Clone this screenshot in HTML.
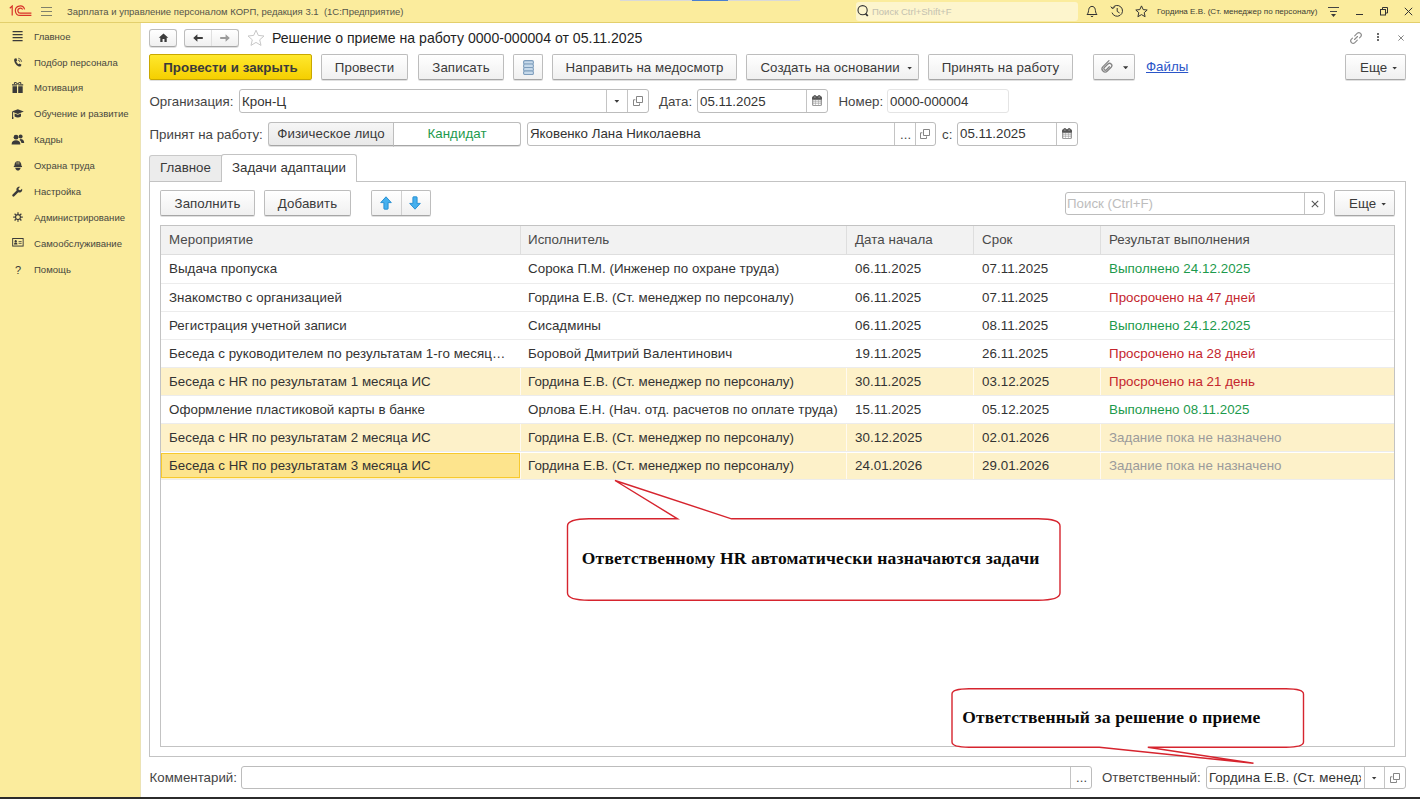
<!DOCTYPE html>
<html lang="ru">
<head>
<meta charset="utf-8">
<title>Решение о приеме на работу</title>
<style>
*{box-sizing:border-box;margin:0;padding:0}
html,body{width:1420px;height:799px;overflow:hidden;background:#fff}
body{position:relative;font-family:"Liberation Sans",Arial,sans-serif;font-size:13px;color:#333;}
.abs{position:absolute}
#titlebar{position:absolute;left:0;top:0;width:1420px;height:23px;background:#fbec9d;border-bottom:1px solid #e3cf6c}
#sidebar{position:absolute;left:0;top:23px;width:140px;height:774px;background:#fbec9d}
#sideedge{position:absolute;left:140px;top:23px;width:1px;height:774px;background:#ece3b5}
#bottombar{position:absolute;left:0;top:797px;width:1420px;height:2px;background:#2b2b2b}
.tb-text{position:absolute;font-size:9.5px;color:#55554a;white-space:nowrap}
.menu-item{position:absolute;left:34px;font-size:9.55px;color:#47473d;white-space:nowrap;line-height:13px}
.micon{position:absolute;left:11px;width:14px;height:14px}
.btn{position:absolute;height:26px;border:1px solid #bdbdbd;border-bottom-color:#a6a6a6;border-radius:2px;background:linear-gradient(#ffffff,#f0f0f0);box-shadow:0 1px 0 rgba(0,0,0,.12);font-size:13.3px;color:#3a3a3a;text-align:center;line-height:25px;white-space:nowrap;letter-spacing:0.07px}
.btn.primary{background:linear-gradient(#ffe82e,#f5cf00);border-color:#c9a800;font-weight:bold;color:#3a3a3a}
.lbl{position:absolute;font-size:13.3px;color:#444;white-space:nowrap;line-height:16px}
.inp{position:absolute;height:23px;border:1px solid #bcbcbc;border-radius:3px;background:#fff;font-size:13.3px;color:#333;line-height:21px;padding-left:2px;white-space:nowrap;overflow:hidden}
.inp .sep{position:absolute;top:0;bottom:0;width:1px;background:#c4c4c4}
.caret{position:absolute;width:5.3px;height:3px;background:#3a3a3a;clip-path:polygon(0 0,100% 0,50% 100%)}
.cell{position:absolute;font-size:13.33px;letter-spacing:0.05px;line-height:16px;white-space:nowrap}
</style>
</head>
<body>
<!-- SECTION:titlebar -->
<div id="titlebar">
<div class="abs" style="left:620px;top:0;width:180px;height:1px;background:#d9d9d9"></div>
<div class="abs" style="left:692px;top:0;width:36px;height:1px;background:#4a7fd0"></div>
<svg class="abs" style="left:9px;top:5px" width="23" height="12" viewBox="0 0 23 12" fill="none" stroke="#d8322a" stroke-width="1.2">
<path d="M0.8 3.2 L3.2 1 V10.6" />
<path d="M22.4 10.4 H11.2 A4.7 4.7 0 1 1 15.6 4.4" />
<path d="M22.4 8.2 H11.4 A2.5 2.5 0 1 1 13.6 4.6" />
</svg>
<div class="abs" style="left:41px;top:7px;width:11px;height:1px;background:#80806a"></div>
<div class="abs" style="left:41px;top:11px;width:11px;height:1px;background:#80806a"></div>
<div class="abs" style="left:41px;top:15px;width:11px;height:1px;background:#80806a"></div>
<div class="tb-text" id="apptitle" style="left:67px;top:5px;line-height:13px">Зарплата и управление персоналом КОРП, редакция 3.1&nbsp; (1С:Предприятие)</div>
<div class="abs" style="left:856px;top:2px;width:222px;height:19px;background:#fdf5cd;border-radius:3px"></div>
<svg class="abs" style="left:857px;top:4px" width="13" height="14" viewBox="0 0 13 14" fill="none" stroke="#333" stroke-width="1.1"><circle cx="5.6" cy="6.2" r="4.6"/><path d="M8.6 9.6 L10.8 12" stroke-width="1.8"/></svg>
<div class="tb-text" style="left:872px;top:5px;line-height:13px;color:#c4c1b0">Поиск Ctrl+Shift+F</div>
<svg class="abs" style="left:1086px;top:5px" width="12" height="13" viewBox="0 0 12 13" fill="none" stroke="#333" stroke-width="1"><path d="M1 9.5 C2.6 8 2.4 6 2.8 4.2 C3.2 2.4 4.4 1.4 6 1.4 C7.6 1.4 8.8 2.4 9.2 4.2 C9.6 6 9.4 8 11 9.5 Z"/><path d="M4.8 11 Q6 12.4 7.2 11"/></svg>
<svg class="abs" style="left:1110px;top:4px" width="14" height="14" viewBox="0 0 14 14" fill="none" stroke="#333" stroke-width="1"><path d="M2.4 4.2 A5.4 5.4 0 1 1 2 8.6"/><path d="M0.8 2.6 L2.4 4.6 L4.6 3.4" /><path d="M7.2 4 V7.4 L9.6 9"/></svg>
<svg class="abs" style="left:1135px;top:5px" width="13" height="13" viewBox="0 0 13 13" fill="none" stroke="#333" stroke-width="1"><path d="M6.5 0.9 L8.2 4.6 L12.2 5 L9.2 7.7 L10.1 11.7 L6.5 9.6 L2.9 11.7 L3.8 7.7 L0.8 5 L4.8 4.6 Z"/></svg>
<div class="tb-text" id="usertxt" style="left:1157px;top:6px;font-size:8.1px;line-height:11px;color:#3d3d33">Гордина Е.В. (Ст. менеджер по персоналу)</div>
<div class="abs" style="left:1328px;top:7px;width:11px;height:1px;background:#444"></div>
<div class="abs" style="left:1330px;top:11px;width:7px;height:1px;background:#444"></div>
<div class="caret" style="left:1331px;top:14px;width:5px;height:3px"></div>
<div class="abs" style="left:1356px;top:14px;width:7px;height:1px;background:#333"></div>
<svg class="abs" style="left:1380px;top:7px" width="8" height="9" viewBox="0 0 8 9" fill="none" stroke="#333" stroke-width="1"><rect x="0.5" y="2.5" width="5" height="5.5"/><path d="M2.5 2.5 V0.5 H7.5 V6 H5.5"/></svg>
<svg class="abs" style="left:1404px;top:7px" width="9" height="9" viewBox="0 0 9 9" fill="none" stroke="#333" stroke-width="1"><path d="M0.8 0.8 L8.2 8.2 M8.2 0.8 L0.8 8.2"/></svg>
</div>
<!-- SECTION:sidebar -->
<div id="sidebar"></div>
<svg class="micon" style="top:29.2px" viewBox="0 0 14 14"><path d="M1.6 2.6H11.6M1.6 5.6H11.6M1.6 8.6H11.6M1.6 11.6H11.6" stroke="#3a3a3a" stroke-width="1.1" fill="none"/></svg>
<div class="menu-item" style="top:30px">Главное</div>
<svg class="micon" style="top:55.2px" viewBox="0 0 14 14"><g transform="translate(1.4,2.3) scale(0.8)"><path d="M3.2 1.6 L5 1.2 L6 4 L4.8 5 C5.2 6.6 6.4 8 7.8 8.8 L9 7.8 L11.4 9.4 L10.6 11 C10 11.8 8.6 11.8 7.4 11.2 C4.6 9.8 2.6 7 2.2 4 C2.1 3 2.4 2 3.2 1.6 Z" fill="#3a3a3a"/><path d="M7 3.4 A2.8 2.8 0 0 1 9.4 6" stroke="#3a3a3a" fill="none" stroke-width="1"/><path d="M7.4 1.2 A5 5 0 0 1 11.6 5.6" stroke="#3a3a3a" fill="none" stroke-width="1"/></g></svg>
<div class="menu-item" style="top:56px">Подбор персонала</div>
<svg class="micon" style="top:81.0px" viewBox="0 0 14 14"><path d="M1.5 5.2H6V12H1.5ZM7.2 5.2H11.7V12H7.2ZM1 3.2H6V4.6H1ZM7.2 3.2H12.2V4.6H7.2Z" fill="#3a3a3a"/><path d="M6.6 3.2 C5 0.6 2.6 1.2 3.6 3 M6.6 3.2 C8.2 0.6 10.6 1.2 9.6 3" stroke="#3a3a3a" fill="none" stroke-width="1.1"/></svg>
<div class="menu-item" style="top:81px">Мотивация</div>
<svg class="micon" style="top:107.0px" viewBox="0 0 14 14"><path d="M0.8 4.6 L6.8 2.2 L12.8 4.6 L6.8 7 Z" fill="#3a3a3a"/><path d="M3.6 6.4 V9.4 C5.4 10.8 8.2 10.8 10 9.4 V6.4 L6.8 7.8 Z" fill="#3a3a3a"/><path d="M1.6 5 V10.4" stroke="#3a3a3a" stroke-width="1"/><rect x="1" y="10" width="1.4" height="2" fill="#3a3a3a"/></svg>
<div class="menu-item" style="top:107px">Обучение и развитие</div>
<svg class="micon" style="top:132.7px" viewBox="0 0 14 14"><circle cx="5" cy="4.2" r="2.4" fill="#3a3a3a"/><path d="M0.6 11.6 C0.6 8.4 2.4 7.2 5 7.2 C7.6 7.2 9.4 8.4 9.4 11.6 Z" fill="#3a3a3a"/><circle cx="9.6" cy="3.4" r="2" fill="#3a3a3a"/><path d="M9.4 6 C11.8 6 13.2 7.2 13.2 10 H10.4 C10.2 8.6 9.6 7.6 8.4 7 Z" fill="#3a3a3a"/></svg>
<div class="menu-item" style="top:133px">Кадры</div>
<svg class="micon" style="top:158.7px" viewBox="0 0 14 14"><g transform="translate(1.9,0.6) scale(0.76,0.9)"><path d="M2 7 C2 3.6 4 1.6 6.6 1.6 C9.2 1.6 11.2 3.6 11.2 7 Z" fill="#3a3a3a"/><rect x="1.2" y="7" width="10.8" height="1.3" fill="#3a3a3a"/><path d="M3 9 C3.4 11 5 12.2 6.6 12.2 C8.2 12.2 9.8 11 10.2 9 Z" fill="#3a3a3a"/><path d="M5.4 1.8 V5.4 M7.8 1.8 V5.4" stroke="#fbec9d" stroke-width="0.7"/></g></svg>
<div class="menu-item" style="top:159px">Охрана труда</div>
<svg class="micon" style="top:184.4px" viewBox="0 0 14 14"><g transform="translate(0.6,2) scale(0.84)"><path d="M12.4 3.2 L10.4 5.2 L8.6 4.8 L8.2 3 L10.2 1 C8.6 0.4 6.8 1 6 2.6 C5.6 3.6 5.6 4.6 6 5.4 L1.2 10.2 C0.6 10.8 0.6 11.6 1.2 12.2 C1.8 12.8 2.6 12.8 3.2 12.2 L8 7.4 C9.4 8 11.2 7.6 12.2 6.2 C12.8 5.2 12.9 4.2 12.4 3.2 Z" fill="#3a3a3a"/></g></svg>
<div class="menu-item" style="top:185px">Настройка</div>
<svg class="micon" style="top:210.4px" viewBox="0 0 14 14"><g transform="translate(1.75,1.85) scale(0.77)"><circle cx="6.8" cy="6.8" r="3.2" fill="none" stroke="#3a3a3a" stroke-width="1.5"/><path d="M6.8 0.6V2.8M6.8 10.8V13M0.6 6.8H2.8M10.8 6.8H13M2.4 2.4L4 4M9.6 9.6L11.2 11.2M11.2 2.4L9.6 4M4 9.6L2.4 11.2" stroke="#3a3a3a" stroke-width="1.6"/></g></svg>
<div class="menu-item" style="top:211px">Администрирование</div>
<svg class="micon" style="top:236.4px" viewBox="0 0 14 14"><g transform="translate(1.16,0.16) scale(0.845,0.9)"><rect x="0.6" y="2.6" width="12.4" height="8.4" fill="none" stroke="#3a3a3a" stroke-width="1.1"/><circle cx="4.2" cy="5.6" r="1.3" fill="#3a3a3a"/><path d="M2.2 9.2 C2.2 7.6 3 7 4.2 7 C5.4 7 6.2 7.6 6.2 9.2 Z" fill="#3a3a3a"/><path d="M7.6 6H11.2M7.6 8H11.2" stroke="#3a3a3a" stroke-width="0.9"/></g></svg>
<div class="menu-item" style="top:237px">Самообслуживание</div>
<div class="abs" style="left:14px;top:262px;font-size:11px;line-height:14px;color:#3a3a3a;margin-left:1px;margin-top:1px">?</div>
<div class="menu-item" style="top:263px">Помощь</div>
<div id="sideedge"></div>
<!-- SECTION:header -->
<div class="btn" style="left:149px;top:29px;width:28px;height:18px;border-radius:3px"></div>
<svg class="abs" style="left:157.5px;top:33.3px" width="11" height="9.4" viewBox="0 0 13 12"><path d="M6.5 0.6 L12.6 6.2 H10.6 V11.6 H7.7 V7.8 H5.3 V11.6 H2.4 V6.2 H0.4 Z" fill="#3c3c3c"/></svg>
<div class="btn" style="left:184px;top:29px;width:55px;height:18px;border-radius:3px"></div>
<div class="abs" style="left:211px;top:30px;width:1px;height:16px;background:#e0e0e0"></div>
<svg class="abs" style="left:193.3px;top:34.3px" width="10" height="8" viewBox="0 0 10 8"><path d="M0.2 4 L4.4 0.3 V3 H9.8 V5 H4.4 V7.7 Z" fill="#3c3c3c"/></svg>
<svg class="abs" style="left:219.8px;top:34.3px" width="10" height="8" viewBox="0 0 10 8"><path d="M9.8 4 L5.6 0.3 V3 H0.2 V5 H5.6 V7.7 Z" fill="#9a9a9a"/></svg>
<svg class="abs" style="left:247px;top:29px" width="18" height="18" viewBox="0 0 18 18" fill="none" stroke="#c8c8c8" stroke-width="1"><path d="M9 1.2 L11.3 6.4 L17 7 L12.7 10.8 L14 16.4 L9 13.4 L4 16.4 L5.3 10.8 L1 7 L6.7 6.4 Z"/></svg>
<div class="abs" id="doctitle" style="left:272px;top:29px;font-size:14.1px;line-height:18px;color:#1f1f1f;white-space:nowrap">Решение о приеме на работу 0000-000004 от 05.11.2025</div>
<svg class="abs" style="left:1348px;top:29.9px" width="16" height="16" viewBox="-8.2 -8.2 16.4 16.4" fill="none" stroke="#8c8c8c" stroke-width="1.15" stroke-linecap="round"><g transform="rotate(-45)"><path d="M0.6 -2.5H4.1A2.5 2.5 0 0 1 4.1 2.5H2.6"/><path d="M-0.6 2.5H-4.1A2.5 2.5 0 0 1 -4.1 -2.5H-2.6"/><path d="M-2.2 0H2.2"/></g></svg>
<div class="abs" style="left:1377px;top:33.3px;width:2.2px;height:1.8px;background:#6a6a6a"></div>
<div class="abs" style="left:1377px;top:36.3px;width:2.2px;height:1.8px;background:#6a6a6a"></div>
<div class="abs" style="left:1377px;top:39.2px;width:2.2px;height:1.8px;background:#6a6a6a"></div>
<svg class="abs" style="left:1397.5px;top:34.6px" width="6" height="6" viewBox="0 0 6 6" fill="none" stroke="#787878" stroke-width="0.9"><path d="M0.4 0.4L5.6 5.6M5.6 0.4L0.4 5.6"/></svg>
<!-- toolbar -->
<div class="btn primary" style="left:149px;top:54px;width:163px">Провести и закрыть</div>
<div class="btn" style="left:321px;top:54px;width:87px">Провести</div>
<div class="btn" style="left:418px;top:54px;width:86px">Записать</div>
<div class="btn" style="left:513px;top:54px;width:30px"></div>
<svg class="abs" style="left:522.9px;top:59.9px" width="11" height="15" viewBox="0 0 11 15"><rect x="0.6" y="0.60" width="9.8" height="3.6" rx="1.4" fill="#c6d9ea" stroke="#7d9dbc" stroke-width="1.1"/><rect x="0.6" y="4.05" width="9.8" height="3.6" rx="1.4" fill="#c6d9ea" stroke="#7d9dbc" stroke-width="1.1"/><rect x="0.6" y="7.50" width="9.8" height="3.6" rx="1.4" fill="#c6d9ea" stroke="#7d9dbc" stroke-width="1.1"/><rect x="0.6" y="10.95" width="9.8" height="3.6" rx="1.4" fill="#c6d9ea" stroke="#7d9dbc" stroke-width="1.1"/></svg>
<div class="btn" style="left:552px;top:54px;width:185px">Направить на медосмотр</div>
<div class="btn" style="left:746px;top:54px;width:173px;text-align:left;padding-left:13.4px">Создать на основании</div>
<div class="caret" style="left:907px;top:66.5px"></div>
<div class="btn" style="left:928px;top:54px;width:145px">Принять на работу</div>
<div class="btn" style="left:1093px;top:54px;width:42px"></div>
<svg class="abs" style="left:1098.4px;top:57.5px" width="18" height="18" viewBox="-9 -9 18 18" fill="none" stroke="#828282" stroke-width="1.25" stroke-linecap="round"><g transform="rotate(45)"><path d="M-3.1 -5.9V2.6A3.1 3.1 0 0 0 3.1 2.6V-2.8A2.3 2.3 0 0 0 -1.5 -2.8V2.3A1.5 1.5 0 0 0 1.5 2.3V-1.8"/></g></svg>
<div class="caret" style="left:1123px;top:66.3px"></div>
<div class="abs" style="left:1146px;top:59px;font-size:13.3px;line-height:16px;color:#2a55c8;text-decoration:underline;white-space:nowrap">Файлы</div>
<div class="btn" style="left:1345px;top:54px;width:61px;text-align:left;padding-left:14px">Еще</div>
<div class="caret" style="left:1392px;top:66.5px"></div>
<!-- SECTION:form -->
<div class="lbl" style="left:149.5px;top:94px">Организация:</div>
<div class="inp" style="left:239px;top:89px;width:410px;height:24px;line-height:24px">Крон-Ц<div class="sep" style="left:366px"></div><div class="sep" style="left:387px"></div></div>
<div class="caret" style="left:614.2px;top:99.7px"></div>
<svg class="abs" style="left:632.5px;top:96.3px" width="10" height="10" viewBox="0 0 10 10" fill="none" stroke="#858585" stroke-width="1"><path d="M3.5 0.5H9.5V6.5H3.5Z"/><path d="M2.4 3.8H0.5V9.5H6.5V7.4"/></svg>
<div class="lbl" style="left:659px;top:94px">Дата:</div>
<div class="inp" style="left:697px;top:89px;width:131px;height:24px;line-height:24px">05.11.2025<div class="sep" style="left:108px"></div></div>
<svg class="abs" style="left:811.5px;top:95.4px" width="10" height="11" viewBox="0 0 10 11"><rect x="0" y="1.2" width="10" height="9.8" rx="1.6" fill="#9b9b9b"/><path d="M0 4.6 V2.8 Q0 1.2 1.6 1.2 H8.4 Q10 1.2 10 2.8 V4.6 Z" fill="#555"/><circle cx="2.9" cy="1.6" r="1.5" fill="#555"/><circle cx="7.1" cy="1.6" r="1.5" fill="#555"/><circle cx="2.9" cy="2" r="0.6" fill="#ddd"/><circle cx="7.1" cy="2" r="0.6" fill="#ddd"/><path d="M1.3 5.3H3.5V6.6H1.3ZM4 5.3H6V6.6H4ZM6.5 5.3H8.7V6.6H6.5ZM1.3 7.2H3.5V8.5H1.3ZM4 7.2H6V8.5H4ZM6.5 7.2H8.7V8.5H6.5ZM1.3 9.1H3.5V10.1H1.3ZM4 9.1H6V10.1H4ZM6.5 9.1H8.7V10.1H6.5Z" fill="#fff"/></svg>
<div class="lbl" style="left:838.5px;top:94px">Номер:</div>
<div class="inp" style="left:887px;top:89px;width:122px;height:24px;line-height:24px;border-color:#e4e4e4">0000-000004</div>
<div class="lbl" style="left:149.5px;top:126.5px">Принят на работу:</div>
<div class="btn" style="left:268px;top:122px;width:126px;height:24px;line-height:22px;border-radius:3px 0 0 3px;background:linear-gradient(#f6f6f6,#e9e9e9);font-size:13.3px">Физическое лицо</div>
<div class="btn" style="left:393px;top:122px;width:128px;height:24px;line-height:22px;border-radius:0 3px 3px 0;background:#fff;color:#1c9a4c;font-size:13.3px">Кандидат</div>
<div class="inp" style="left:527px;top:122px;width:409px;height:24px;line-height:22px">Яковенко Лана Николаевна<div class="sep" style="left:366px"></div><div class="sep" style="left:387px"></div></div>
<div class="abs" style="left:900px;top:126.5px;font-size:13px;letter-spacing:0.2px;line-height:16px;color:#444">...</div>
<svg class="abs" style="left:920.2px;top:129px" width="10" height="10" viewBox="0 0 10 10" fill="none" stroke="#858585" stroke-width="1"><path d="M3.5 0.5H9.5V6.5H3.5Z"/><path d="M2.4 3.8H0.5V9.5H6.5V7.4"/></svg>
<div class="lbl" style="left:942px;top:126.5px">с:</div>
<div class="inp" style="left:957px;top:122px;width:121px;height:24px;line-height:22px">05.11.2025<div class="sep" style="left:98px"></div></div>
<svg class="abs" style="left:1061.5px;top:128.4px" width="10" height="11" viewBox="0 0 10 11"><rect x="0" y="1.2" width="10" height="9.8" rx="1.6" fill="#9b9b9b"/><path d="M0 4.6 V2.8 Q0 1.2 1.6 1.2 H8.4 Q10 1.2 10 2.8 V4.6 Z" fill="#555"/><circle cx="2.9" cy="1.6" r="1.5" fill="#555"/><circle cx="7.1" cy="1.6" r="1.5" fill="#555"/><circle cx="2.9" cy="2" r="0.6" fill="#ddd"/><circle cx="7.1" cy="2" r="0.6" fill="#ddd"/><path d="M1.3 5.3H3.5V6.6H1.3ZM4 5.3H6V6.6H4ZM6.5 5.3H8.7V6.6H6.5ZM1.3 7.2H3.5V8.5H1.3ZM4 7.2H6V8.5H4ZM6.5 7.2H8.7V8.5H6.5ZM1.3 9.1H3.5V10.1H1.3ZM4 9.1H6V10.1H4ZM6.5 9.1H8.7V10.1H6.5Z" fill="#fff"/></svg>
<!-- SECTION:tabs -->
<div class="abs" style="left:149px;top:181px;width:1257px;height:576px;border:1px solid #c3c3c3;background:#fff"></div>
<div class="abs" style="left:149px;top:155px;width:73px;height:27px;border:1px solid #c9c9c9;border-bottom:1px solid #c3c3c3;border-radius:3px 0 0 0;background:#ececec;font-size:13.3px;line-height:23.6px;text-align:center;color:#3a3a3a">Главное</div>
<div class="abs" style="left:221px;top:154px;width:136px;height:28px;border:1px solid #c3c3c3;border-bottom:none;border-radius:3px 3px 0 0;background:#fff;font-size:13.3px;line-height:25.6px;text-align:center;color:#333">Задачи адаптации</div>
<div class="btn" style="left:160px;top:190px;width:95px">Заполнить</div>
<div class="btn" style="left:264px;top:190px;width:87px">Добавить</div>
<div class="btn" style="left:371px;top:190px;width:60px"></div>
<div class="abs" style="left:401px;top:191px;width:1px;height:24px;background:#d0d0d0"></div>
<svg class="abs" style="left:380.1px;top:196.3px" width="12" height="14" viewBox="0 0 12 14"><path d="M6 0.8 L11.3 6.6 H8.1 V12.6 Q8.1 13.2 7.5 13.2 H4.5 Q3.9 13.2 3.9 12.6 V6.6 H0.7 Z" fill="#45b0ee" stroke="#1f8ad0" stroke-width="0.9" stroke-linejoin="round"/></svg>
<svg class="abs" style="left:408.9px;top:196.3px" width="12" height="14" viewBox="0 0 12 14"><path d="M6 13.2 L11.3 7.4 H8.1 V1.4 Q8.1 0.8 7.5 0.8 H4.5 Q3.9 0.8 3.9 1.4 V7.4 H0.7 Z" fill="#45b0ee" stroke="#1f8ad0" stroke-width="0.9" stroke-linejoin="round"/></svg>
<div class="inp" style="left:1065px;top:192px;width:260px;color:#bdbdbd;padding-left:1px">Поиск (Ctrl+F)<div class="sep" style="left:238px"></div></div>
<svg class="abs" style="left:1311px;top:200px" width="8" height="8" viewBox="0 0 8 8" fill="none" stroke="#555" stroke-width="1.1"><path d="M0.8 0.8 L7.2 7.2 M7.2 0.8 L0.8 7.2"/></svg>
<div class="btn" style="left:1334px;top:190px;width:61px;text-align:left;padding-left:14px">Еще</div>
<div class="caret" style="left:1381px;top:202.5px"></div>
<!-- SECTION:table -->
<div class="abs" style="left:160px;top:225px;width:1235px;height:522px;border:1px solid #c3c3c3;background:#fff"></div>
<div class="abs" style="left:161px;top:226px;width:1233px;height:29px;background:#f2f2f2;border-bottom:1px solid #dedede"></div>
<div class="abs" style="left:520px;top:226px;width:1px;height:28px;background:#dedede"></div>
<div class="abs" style="left:846px;top:226px;width:1px;height:28px;background:#dedede"></div>
<div class="abs" style="left:973px;top:226px;width:1px;height:28px;background:#dedede"></div>
<div class="abs" style="left:1100px;top:226px;width:1px;height:28px;background:#dedede"></div>
<div class="cell" style="left:169px;top:232px;color:#4a4a4a">Мероприятие</div>
<div class="cell" style="left:528px;top:232px;color:#4a4a4a">Исполнитель</div>
<div class="cell" style="left:855px;top:232px;color:#4a4a4a">Дата начала</div>
<div class="cell" style="left:982px;top:232px;color:#4a4a4a">Срок</div>
<div class="cell" style="left:1109px;top:232px;color:#4a4a4a">Результат выполнения</div>
<div class="abs" style="left:161px;top:283px;width:1233px;height:1px;background:#ececec"></div>
<div class="cell" style="left:169px;top:261.3px;color:#333">Выдача пропуска</div>
<div class="cell" style="left:528px;top:261.3px;color:#333">Сорока П.М. (Инженер по охране труда)</div>
<div class="cell" style="left:855px;top:261.3px;color:#333">06.11.2025</div>
<div class="cell" style="left:982px;top:261.3px;color:#333">07.11.2025</div>
<div class="cell" style="left:1109px;top:261.3px;color:#1c9a4c">Выполнено 24.12.2025</div>
<div class="abs" style="left:161px;top:311px;width:1233px;height:1px;background:#ececec"></div>
<div class="cell" style="left:169px;top:290.3px;color:#333">Знакомство с организацией</div>
<div class="cell" style="left:528px;top:290.3px;color:#333">Гордина Е.В. (Ст. менеджер по персоналу)</div>
<div class="cell" style="left:855px;top:290.3px;color:#333">06.11.2025</div>
<div class="cell" style="left:982px;top:290.3px;color:#333">07.11.2025</div>
<div class="cell" style="left:1109px;top:290.3px;color:#c4262e">Просрочено на 47 дней</div>
<div class="abs" style="left:161px;top:339px;width:1233px;height:1px;background:#ececec"></div>
<div class="cell" style="left:169px;top:318.3px;color:#333">Регистрация учетной записи</div>
<div class="cell" style="left:528px;top:318.3px;color:#333">Сисадмины</div>
<div class="cell" style="left:855px;top:318.3px;color:#333">06.11.2025</div>
<div class="cell" style="left:982px;top:318.3px;color:#333">08.11.2025</div>
<div class="cell" style="left:1109px;top:318.3px;color:#1c9a4c">Выполнено 24.12.2025</div>
<div class="abs" style="left:161px;top:367px;width:1233px;height:1px;background:#ececec"></div>
<div class="cell" style="left:169px;top:346.3px;color:#333">Беседа с руководителем по результатам 1-го месяц…</div>
<div class="cell" style="left:528px;top:346.3px;color:#333">Боровой Дмитрий Валентинович</div>
<div class="cell" style="left:855px;top:346.3px;color:#333">19.11.2025</div>
<div class="cell" style="left:982px;top:346.3px;color:#333">26.11.2025</div>
<div class="cell" style="left:1109px;top:346.3px;color:#c4262e">Просрочено на 28 дней</div>
<div class="abs" style="left:161px;top:368px;width:1233px;height:27px;background:#fdf1c9"></div>
<div class="abs" style="left:520px;top:368px;width:1px;height:27px;background:#fffaf0"></div>
<div class="abs" style="left:846px;top:368px;width:1px;height:27px;background:#fffaf0"></div>
<div class="abs" style="left:973px;top:368px;width:1px;height:27px;background:#fffaf0"></div>
<div class="abs" style="left:1100px;top:368px;width:1px;height:27px;background:#fffaf0"></div>
<div class="abs" style="left:161px;top:395px;width:1233px;height:1px;background:#ececec"></div>
<div class="cell" style="left:169px;top:374.3px;color:#333">Беседа с HR по результатам 1 месяца ИС</div>
<div class="cell" style="left:528px;top:374.3px;color:#333">Гордина Е.В. (Ст. менеджер по персоналу)</div>
<div class="cell" style="left:855px;top:374.3px;color:#333">30.11.2025</div>
<div class="cell" style="left:982px;top:374.3px;color:#333">03.12.2025</div>
<div class="cell" style="left:1109px;top:374.3px;color:#c4262e">Просрочено на 21 день</div>
<div class="abs" style="left:161px;top:423px;width:1233px;height:1px;background:#ececec"></div>
<div class="cell" style="left:169px;top:402.3px;color:#333">Оформление пластиковой карты в банке</div>
<div class="cell" style="left:528px;top:402.3px;color:#333">Орлова Е.Н. (Нач. отд. расчетов по оплате труда)</div>
<div class="cell" style="left:855px;top:402.3px;color:#333">15.11.2025</div>
<div class="cell" style="left:982px;top:402.3px;color:#333">05.12.2025</div>
<div class="cell" style="left:1109px;top:402.3px;color:#1c9a4c">Выполнено 08.11.2025</div>
<div class="abs" style="left:161px;top:424px;width:1233px;height:27px;background:#fdf1c9"></div>
<div class="abs" style="left:520px;top:424px;width:1px;height:27px;background:#fffaf0"></div>
<div class="abs" style="left:846px;top:424px;width:1px;height:27px;background:#fffaf0"></div>
<div class="abs" style="left:973px;top:424px;width:1px;height:27px;background:#fffaf0"></div>
<div class="abs" style="left:1100px;top:424px;width:1px;height:27px;background:#fffaf0"></div>
<div class="abs" style="left:161px;top:451px;width:1233px;height:1px;background:#ececec"></div>
<div class="cell" style="left:169px;top:430.3px;color:#333">Беседа с HR по результатам 2 месяца ИС</div>
<div class="cell" style="left:528px;top:430.3px;color:#333">Гордина Е.В. (Ст. менеджер по персоналу)</div>
<div class="cell" style="left:855px;top:430.3px;color:#333">30.12.2025</div>
<div class="cell" style="left:982px;top:430.3px;color:#333">02.01.2026</div>
<div class="cell" style="left:1109px;top:430.3px;color:#9b9b9b">Задание пока не назначено</div>
<div class="abs" style="left:161px;top:453px;width:1233px;height:26px;background:#fdf1c9"></div>
<div class="abs" style="left:520px;top:453px;width:1px;height:26px;background:#fffaf0"></div>
<div class="abs" style="left:846px;top:453px;width:1px;height:26px;background:#fffaf0"></div>
<div class="abs" style="left:973px;top:453px;width:1px;height:26px;background:#fffaf0"></div>
<div class="abs" style="left:1100px;top:453px;width:1px;height:26px;background:#fffaf0"></div>
<div class="abs" style="left:161px;top:479px;width:1233px;height:1px;background:#ececec"></div>
<div class="abs" style="left:161px;top:453px;width:359px;height:25px;background:#fde48d;border:1.5px solid #f7c92e"></div>
<div class="cell" style="left:169px;top:458.3px;color:#333">Беседа с HR по результатам 3 месяца ИС</div>
<div class="cell" style="left:528px;top:458.3px;color:#333">Гордина Е.В. (Ст. менеджер по персоналу)</div>
<div class="cell" style="left:855px;top:458.3px;color:#333">24.01.2026</div>
<div class="cell" style="left:982px;top:458.3px;color:#333">29.01.2026</div>
<div class="cell" style="left:1109px;top:458.3px;color:#9b9b9b">Задание пока не назначено</div>
<!-- SECTION:bottom -->
<div class="lbl" style="left:149.5px;top:769.5px">Комментарий:</div>
<div class="inp" style="left:241px;top:766px;width:851px;height:23px"><div class="sep" style="left:828px"></div></div>
<div class="abs" style="left:1076px;top:769.5px;font-size:13px;letter-spacing:0.2px;line-height:16px;color:#444">...</div>
<div class="lbl" style="left:1102px;top:769.5px">Ответственный:</div>
<div class="inp" style="left:1206px;top:766px;width:200px;height:23px;line-height:21px"><span style="display:block;width:152px;overflow:hidden;letter-spacing:0.06px">Гордина Е.В. (Ст. менеджер по персоналу)</span><div class="sep" style="left:157px"></div><div class="sep" style="left:177px"></div></div>
<div class="caret" style="left:1371.5px;top:776.5px"></div>
<svg class="abs" style="left:1389.8px;top:773px" width="10" height="10" viewBox="0 0 10 10" fill="none" stroke="#858585" stroke-width="1"><path d="M3.5 0.5H9.5V6.5H3.5Z"/><path d="M2.4 3.8H0.5V9.5H6.5V7.4"/></svg>
<!-- SECTION:callouts -->
<svg class="abs" style="left:0;top:0" width="1420" height="799" viewBox="0 0 1420 799">
<path d="M615 480.5 L677.5 518.8 H589 Q567.5 519 567.5 526 V593 Q567.5 600.2 589 600.2 H1038 Q1060 600.2 1060 593 V526 Q1060 518.8 1038 518.8 H731.5 Z" fill="#fff" stroke="#d6242e" stroke-width="1.4" stroke-linejoin="miter"/>
<text x="581.8" y="564.3" textLength="457.5" lengthAdjust="spacing" font-family="'Liberation Serif','Times New Roman',serif" font-weight="bold" font-size="17.5px" fill="#0a0a0a">Ответственному HR автоматически назначаются задачи</text>
<path d="M1253.5 763.3 L1099.3 747.2 H969 Q952 747.2 952 742 V694 Q952 688.7 969 688.7 H1286 Q1303.5 688.7 1303.5 694 V742 Q1303.5 747.2 1286 747.2 H1147.8 Z" fill="#fff" stroke="#d6242e" stroke-width="1.4"/>
<text x="962.3" y="723.4" textLength="298" lengthAdjust="spacing" font-family="'Liberation Serif','Times New Roman',serif" font-weight="bold" font-size="17.5px" fill="#0a0a0a">Ответственный за решение о приеме</text>
</svg>
<div id="bottombar"></div>
</body>
</html>
